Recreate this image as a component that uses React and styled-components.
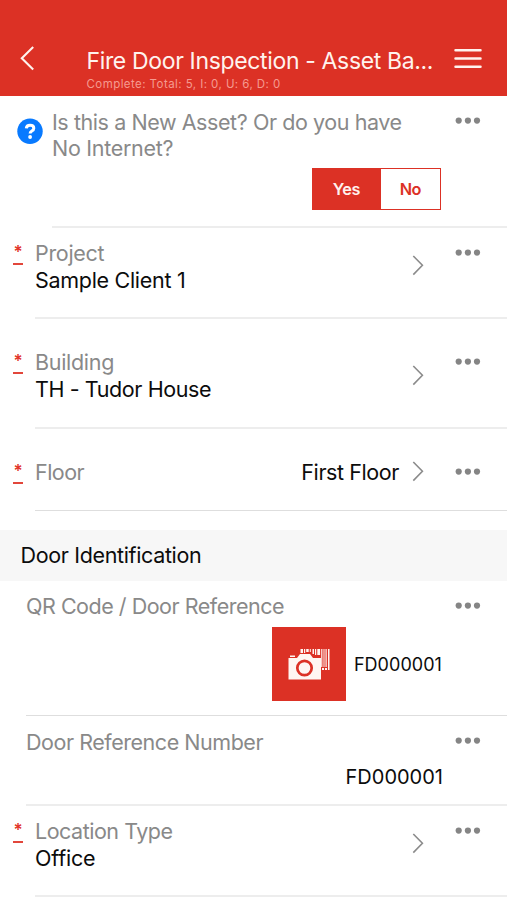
import React from 'react';
import styled, { createGlobalStyle } from 'styled-components';

const RED = '#dc3125';

const GlobalStyle = createGlobalStyle`
  *, *::before, *::after { box-sizing: border-box; }
  body {
    margin: 0;
    background: #fff;
    font-family: Inter, "Liberation Sans", sans-serif;
    font-kerning: normal;
  }
`;

const Screen = styled.main`
  width: 100%;
  height: 900px;
  overflow: hidden;
  background: #fff;
`;

const Header = styled.header`
  display: flex;
  align-items: flex-start;
  height: 96px;
  padding: 45px 25px 0 20px;
  background: ${RED};
  color: #fff3ee;
`;

const IconButton = styled.button`
  display: block;
  flex: none;
  padding: 0;
  border: 0;
  background: none;
  color: inherit;
  line-height: 0;
`;

const BackButton = styled(IconButton)`
  width: 66px;
  text-align: left;
`;

const Titles = styled.div`
  flex: 1;
  min-width: 0;
  padding: 2px 0 0 0.5px;
  white-space: nowrap;
`;

const Title = styled.h1`
  margin: 0;
  font-size: 23px;
  font-weight: 400;
  line-height: 28px;
  letter-spacing: -0.35px;
`;

const Subtitle = styled.p`
  margin: 2px 0 0;
  font-size: 11.5px;
  line-height: 14px;
  letter-spacing: 0.43px;
  color: #f59a90;
`;

const Row = styled.section`
  display: flex;
  height: ${(p) => p.$height}px;
`;

const Gutter = styled.div`
  flex: none;
  width: ${(p) => p.$width}px;
  padding: ${(p) => p.$top || 0}px 0 0 ${(p) => p.$left || 0}px;
`;

const Required = styled.div`
  width: 10px;
  height: 23px;
  border-bottom: 2px solid #e2463b;
  color: #e2352a;
  font-size: 17px;
  font-weight: 600;
  line-height: 21px;
  text-align: center;
`;

const Content = styled.div`
  display: flex;
  flex: 1;
  min-width: 0;
  padding-top: ${(p) => p.$top}px;
  border-bottom: ${(p) => p.$line || 2}px solid ${(p) => (p.$line === 1 ? '#dedede' : '#ededed')};
`;

const Fields = styled.div`
  display: flex;
  flex: 1;
  flex-direction: column;
  min-width: 0;
  margin-top: ${(p) => -(p.$lift || 0)}px;
`;

const Text = styled.div`
  color: ${(p) => (p.$dark ? '#0c0c0c' : '#898989')};
  font-size: ${(p) => p.$size || 21.5}px;
  line-height: 26px;
  letter-spacing: ${(p) => p.$spacing || 0}px;
  white-space: nowrap;
`;

const StackedValue = styled(Text)`
  margin-top: 0.8px;
`;

const InlineValue = styled(Text)`
  margin: -1px 13px 0 0;
`;

const NumberValue = styled(Text)`
  align-self: flex-end;
  margin: 9px 12px 0 0;
`;

const ChevronSlot = styled.div`
  flex: none;
  width: 43px;
  padding-top: ${(p) => p.$offset}px;
  line-height: 0;
`;

const MoreButton = styled(IconButton)`
  width: 52px;
  height: 22px;
  text-align: left;
`;

const Toggle = styled.div`
  display: flex;
  align-self: flex-end;
  width: 129px;
  height: 42px;
  margin: 7px 13.6px 0 0;
  border: 1.5px solid ${RED};
`;

const ToggleOption = styled.button`
  width: ${(p) => (p.$active ? 68 : 59)}px;
  height: 100%;
  padding: 0 ${(p) => (p.$active ? 2 : 1)}px 0 0;
  border: 0;
  background: ${(p) => (p.$active ? RED : '#fff')};
  color: ${(p) => (p.$active ? '#fff0ec' : RED)};
  font: 600 16.3px Inter, "Liberation Sans", sans-serif;
  letter-spacing: -0.4px;
`;

const SectionTitle = styled.h2`
  height: 51px;
  margin: 19px 0 0;
  padding: 12px 0 0 20.5px;
  background: #f7f7f7;
  color: #0c0c0c;
  font-size: 21.5px;
  font-weight: 400;
  line-height: 26px;
  letter-spacing: -0.345px;
`;

const ScanField = styled.div`
  display: flex;
  align-items: center;
  align-self: flex-end;
  margin: 8px 13px 0 0;
`;

const ScanButton = styled(IconButton)`
  width: 74px;
  height: 74px;
  margin-right: 8px;
  background: ${RED};
`;

const ScanValue = styled(Text)`
  padding-top: 1px;
`;

function Dots() {
  return (
    <MoreButton aria-label="More options">
      <svg width="28" height="22" viewBox="0 0 28 22" fill="#858585">
        <circle cx="3.7" cy="11.6" r="3.1" />
        <circle cx="12.9" cy="11.6" r="3.1" />
        <circle cx="22" cy="11.6" r="3.1" />
      </svg>
    </MoreButton>
  );
}

function Chevron({ offset }) {
  return (
    <ChevronSlot $offset={offset}>
      <svg width="14" height="22" viewBox="0 0 14 22" fill="none" stroke="#8b8b8b" strokeWidth="1.6">
        <path d="M1.3 2 10.4 11.300 1.3 20.600" />
      </svg>
    </ChevronSlot>
  );
}

function HelpIcon() {
  return (
    <svg width="26" height="26" viewBox="0 0 26 26" fill="none" display="block">
      <circle cx="13" cy="13.3" r="12.7" fill="#087aff" />
      <path
        d="M9.3 10.300C9.500 8.300 10.900 7.300 13 7.300c2.200 0 3.800 1.100 3.800 2.900 0 1.500-.9 2.200-2 2.900-1.200.8-1.700 1.200-1.700 2.500"
        stroke="#fff"
        strokeWidth="3"
      />
      <circle cx="13.1" cy="19" r="1.900" fill="#fff" />
    </svg>
  );
}

function ScanIcon() {
  return (
    <svg width="74" height="74" viewBox="0 0 74 74">
      <g fill="#fff6f2">
        <path d="M28.5 22h2.5v4h-2.500zM32 22h1.200v4H32zM34.200 22h2.500v3h-2.500zM37.800 22h1v3h-1zM40.500 22h1.500v5h-1.500zM43 22h1.200v6H43zM45.300 22h2.800v6h-2.800zM49.200 22h1.200v18h-1.200zM51.500 22h1v18h-1zM53.500 22h1.200v18h-1.200zM56 22h1.500v21H56z" />
        <path d="M50 41h2v2h-2zM53 41h2v2h-2z" />
        <path d="M16.500 31h8.500l3-4h10l3 4h8v21.500H16.500zM18 28.500h5V30h-5z" />
      </g>
      <circle cx="32.500" cy="41" r="7.200" fill="none" stroke={RED} strokeWidth="2.700" />
    </svg>
  );
}

function SelectRow({ height, top, lift, label, labelSpacing, value, valueSpacing }) {
  return (
    <Row $height={height}>
      <Gutter $width={35} $left={13} $top={top + 1}>
        <Required>*</Required>
      </Gutter>
      <Content $top={top}>
        <Fields $lift={lift}>
          <Text $spacing={labelSpacing}>{label}</Text>
          <StackedValue $dark $spacing={valueSpacing}>{value}</StackedValue>
        </Fields>
        <Chevron offset={13.6} />
        <Dots />
      </Content>
    </Row>
  );
}

export default function App() {
  return (
    <>
      <GlobalStyle />
      <Screen>
        <Header>
          <BackButton aria-label="Back">
            <svg width="16" height="26" viewBox="0 0 16 26" fill="none" stroke="currentColor" strokeWidth="2.1">
              <path d="M13.200 2 1.800 13.200 13.200 24.400" />
            </svg>
          </BackButton>
          <Titles>
            <Title>Fire Door Inspection - Asset Ba...</Title>
            <Subtitle>Complete: Total: 5, I: 0, U: 6, D: 0</Subtitle>
          </Titles>
          <IconButton aria-label="Menu">
            <svg width="28" height="26" viewBox="0 0 28 26" stroke="currentColor" strokeWidth="2.500" strokeLinecap="round">
              <path d="M1.500 5.300h25M1.500 13.500h25M1.500 21.700h25" />
            </svg>
          </IconButton>
        </Header>

        <Row $height={132}>
          <Gutter $width={52} $left={17} $top={22}>
            <HelpIcon />
          </Gutter>
          <Content $top={13}>
            <Fields>
              <Text $spacing={-0.423}>Is this a New Asset? Or do you have</Text>
              <Text $spacing={-0.288}>No Internet?</Text>
              <Toggle>
                <ToggleOption $active>Yes</ToggleOption>
                <ToggleOption>No</ToggleOption>
              </Toggle>
            </Fields>
            <Dots />
          </Content>
        </Row>

        <SelectRow height={91} top={12.6} lift={0.6} label="Project" labelSpacing={-0.314} value="Sample Client 1" valueSpacing={-0.3} />
        <SelectRow height={110} top={31} lift={1} label="Building" labelSpacing={-0.3} value="TH - Tudor House" valueSpacing={-0.398} />

        <Row $height={82}>
          <Gutter $width={35} $left={13} $top={32}>
            <Required>*</Required>
          </Gutter>
          <Content $top={31} $line={1}>
            <Fields $lift={1}>
              <Text $spacing={-0.546}>Floor</Text>
            </Fields>
            <InlineValue $dark $spacing={-0.41}>First Floor</InlineValue>
            <Chevron offset={0} />
            <Dots />
          </Content>
        </Row>

        <SectionTitle>Door Identification</SectionTitle>

        <Row $height={135}>
          <Gutter $width={26} />
          <Content $top={13} $line={1}>
            <Fields $lift={1}>
              <Text $spacing={-0.48}>QR Code / Door Reference</Text>
              <ScanField>
                <ScanButton aria-label="Scan code">
                  <ScanIcon />
                </ScanButton>
                <ScanValue $dark $size={18} $spacing={0.05}>FD000001</ScanValue>
              </ScanField>
            </Fields>
            <Dots />
          </Content>
        </Row>

        <Row $height={90}>
          <Gutter $width={26} />
          <Content $top={13.4}>
            <Fields $lift={0.4}>
              <Text $spacing={-0.46}>Door Reference Number</Text>
              <NumberValue $dark $size={20} $spacing={0}>FD000001</NumberValue>
            </Fields>
            <Dots />
          </Content>
        </Row>

        <SelectRow height={91} top={12.5} lift={0.5} label="Location Type" labelSpacing={-0.482} value="Office" valueSpacing={-0.201} />
      </Screen>
    </>
  );
}
